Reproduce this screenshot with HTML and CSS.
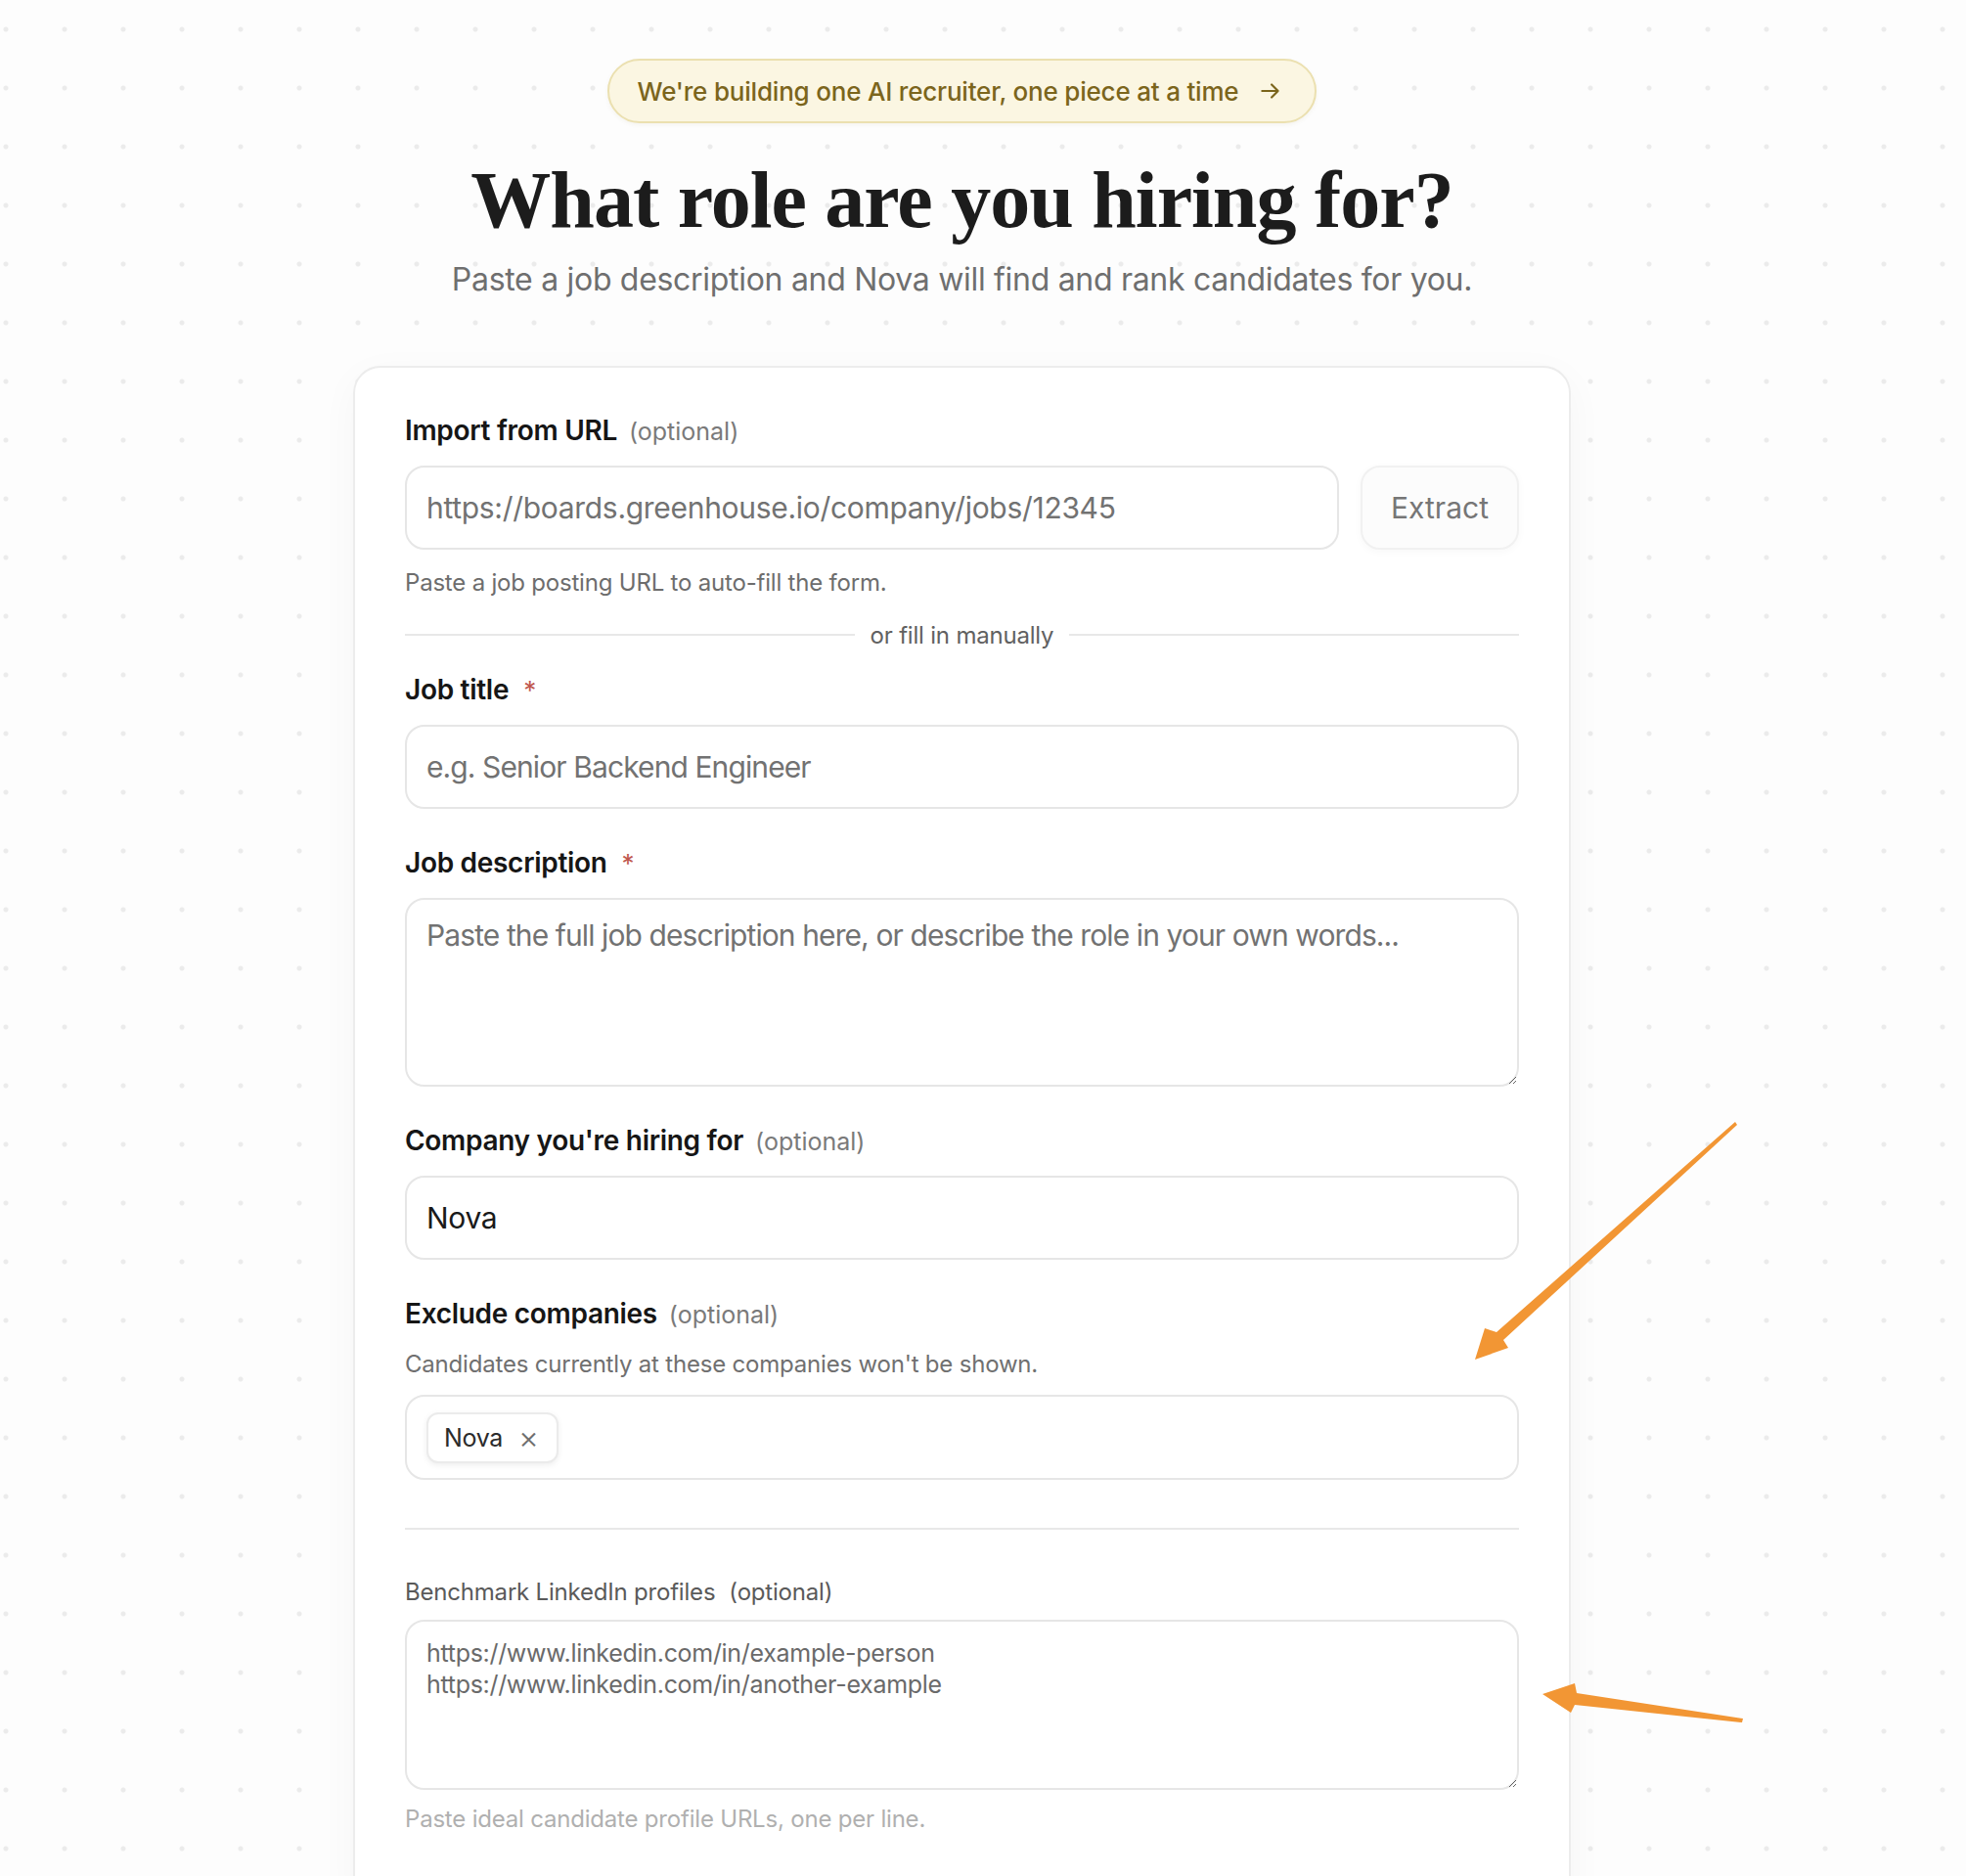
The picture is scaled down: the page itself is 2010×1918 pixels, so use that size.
FILE: index.html
```html
<!DOCTYPE html>
<html lang="en">
<head>
<meta charset="utf-8">
<title>What role are you hiring for?</title>
<link rel="stylesheet" href="styles.css">
</head>
<body>
<div class="page">
  <a class="pill" href="#">
    <span>We're building one AI recruiter, one piece at a time</span>
    <svg class="pill-arrow" viewBox="0 0 24 24" width="24" height="24" aria-hidden="true"><path d="M4 12h15M13 6l6 6-6 6" fill="none" stroke="currentColor" stroke-width="2" stroke-linecap="round" stroke-linejoin="round"/></svg>
  </a>
  <h1 class="title">What role are you hiring for?</h1>
  <p class="subtitle">Paste a job description and Nova will find and rank candidates for you.</p>

  <form class="card">
    <div class="label-row"><span class="label">Import from URL</span><span class="optional">(optional)</span></div>
    <div class="url-row">
      <input class="input url-input" type="text" placeholder="https://boards.greenhouse.io/company/jobs/12345">
      <button class="extract" type="button">Extract</button>
    </div>
    <p class="hint">Paste a job posting URL to auto-fill the form.</p>

    <div class="divider"><span class="divider-line"></span><span class="divider-text">or fill in manually</span><span class="divider-line"></span></div>

    <div class="label-row field-first"><span class="label">Job title</span><span class="req">*</span></div>
    <input class="input tight" type="text" placeholder="e.g. Senior Backend Engineer">

    <div class="label-row field"><span class="label">Job description</span><span class="req">*</span></div>
    <textarea class="input textarea tight" placeholder="Paste the full job description here, or describe the role in your own words..."></textarea>

    <div class="label-row field"><span class="label">Company you're hiring for</span><span class="optional">(optional)</span></div>
    <input class="input filled" type="text" value="Nova">

    <div class="label-row field"><span class="label">Exclude companies</span><span class="optional">(optional)</span></div>
    <p class="help">Candidates currently at these companies won't be shown.</p>
    <div class="input tag-input">
      <span class="chip">Nova<span class="chip-x">×</span></span>
    </div>

    <hr class="sep">

    <div class="label-row small-row"><span class="small-label">Benchmark LinkedIn profiles</span><span class="small-label">(optional)</span></div>
    <textarea class="input textarea small-area" placeholder="https://www.linkedin.com/in/example-person&#10;https://www.linkedin.com/in/another-example"></textarea>
    <p class="hint light">Paste ideal candidate profile URLs, one per line.</p>
  </form>
</div>

<svg class="annotations" width="2010" height="1918" viewBox="0 0 2010 1918" aria-hidden="true">
  <polygon class="arrow" points="1508,1390 1518,1358 1530,1362 1774,1147 1776,1150 1537,1370 1542,1378"/>
  <polygon class="arrow" points="1577,1732 1610,1721 1612,1731 1782,1757 1781,1761 1610,1743 1606,1751"/>
</svg>
</body>
</html>
```

FILE: styles.css
```css
* { box-sizing: border-box; }

html, body { margin: 0; padding: 0; }

body {
  font-family: "Inter", "Noto Sans", sans-serif;
  color: #1a1a1a;
  background-color: #fdfdfd;
  background-image: radial-gradient(circle at center, #ebebeb 0, #ebebeb 2px, transparent 3px);
  background-size: 60px 60px;
  background-position: -24px 0;
  min-height: 1918px;
}

.page {
  display: flex;
  flex-direction: column;
  align-items: center;
  padding: 60px 43px 0 0;
}

.pill {
  display: flex;
  align-items: center;
  gap: 20px;
  height: 66px;
  padding: 0 32px 0 29px;
  border: 2px solid #ebe0b0;
  border-radius: 33px;
  background: #fbf6e2;
  color: #7b651c;
  font-size: 26px;
  font-weight: 500;
  letter-spacing: -0.2px;
  text-decoration: none;
  box-shadow: 0 2px 4px rgba(120, 100, 30, 0.06);
}

.pill-arrow { width: 26px; height: 26px; }

.title {
  margin: 38px 0 0;
  font-family: "Liberation Serif", "Times New Roman", serif;
  font-weight: 700;
  font-size: 82px;
  line-height: 82px;
  letter-spacing: -1px;
  color: #1c1c1c;
}

.subtitle {
  margin: 20px 0 0;
  font-size: 32px;
  line-height: 40px;
  color: #6f6f6f;
  letter-spacing: -0.3px;
}

.card {
  width: 1245px;
  margin-top: 68px;
  padding: 46px 51px 80px;
  background: #ffffff;
  border: 2px solid #ececec;
  border-radius: 28px;
  box-shadow: 0 10px 40px rgba(0, 0, 0, 0.035);
  display: flex;
  flex-direction: column;
}

.label-row {
  display: flex;
  align-items: baseline;
  gap: 12px;
  height: 36px;
  margin-bottom: 18px;
}

.label {
  font-size: 28px;
  line-height: 36px;
  font-weight: 600;
  color: #161616;
  letter-spacing: -0.3px;
}

.optional {
  font-size: 25px;
  color: #7a7a7a;
}

.req {
  color: #c0574e;
  font-size: 26px;
  margin-left: 3px;
}

.field { margin-top: 37px; }
.field-first { margin-top: 23px; }

.input {
  display: block;
  width: 100%;
  height: 86px;
  padding: 0 20px;
  border: 2px solid #e6e6e6;
  border-radius: 20px;
  background: #ffffff;
  font-family: inherit;
  font-size: 30px;
  color: #1a1a1a;
  letter-spacing: -0.3px;
  outline: none;
}

.input.tight { letter-spacing: -0.9px; }

.input::placeholder { color: #727272; }

.filled { color: #1a1a1a; }

.url-row {
  display: flex;
  gap: 22px;
}

.url-input { flex: 1; }

.extract {
  flex: 0 0 162px;
  height: 86px;
  border: 2px solid #f1f1f1;
  border-radius: 20px;
  background: #fcfcfc;
  box-shadow: 0 2px 8px rgba(0, 0, 0, 0.03);
  font-family: inherit;
  font-size: 30px;
  color: #767676;
}

.hint {
  margin: 19px 0 0;
  font-size: 24px;
  line-height: 30px;
  color: #6d6d6d;
  letter-spacing: -0.2px;
}

.hint.light { margin-top: 15px; color: #b0b0b0; }

.divider {
  display: flex;
  align-items: center;
  gap: 16px;
  margin-top: 23px;
  height: 30px;
}

.divider-line {
  flex: 1;
  height: 2px;
  background: #e8e8e8;
}

.divider-text {
  font-size: 24px;
  color: #616161;
  letter-spacing: -0.2px;
}

.textarea {
  height: 193px;
  padding: 18px 20px;
  line-height: 36px;
  resize: vertical;
}

.help {
  margin: 1px 0 0;
  font-size: 24px;
  line-height: 30px;
  color: #707070;
  letter-spacing: -0.2px;
}

.tag-input {
  margin-top: 16px;
  height: 87px;
  display: flex;
  align-items: center;
  padding: 0 20px;
}

.chip {
  display: inline-flex;
  align-items: center;
  height: 52px;
  padding: 0 18px 0 16px;
  border: 2px solid #ebebeb;
  border-radius: 12px;
  background: #ffffff;
  box-shadow: 0 2px 6px rgba(0, 0, 0, 0.07);
  font-size: 25px;
  color: #2b2b2b;
}

.chip-x {
  margin-left: 16px;
  color: #6f6f6f;
  font-size: 32px;
  font-weight: 300;
  line-height: 1;
}

.sep {
  margin: 49px 0 0;
  border: 0;
  height: 2px;
  background: #e8e8e8;
}

.small-row {
  margin-top: 48px;
  height: 32px;
  gap: 14px;
  margin-bottom: 12px;
}

.small-label {
  font-size: 24px;
  line-height: 32px;
  color: #5a5a5a;
  letter-spacing: -0.2px;
}

.small-area {
  height: 174px;
  padding: 16px 20px;
  font-size: 25px;
  line-height: 32px;
}

.small-area::placeholder { color: #6a6a6a; }

.annotations {
  position: absolute;
  top: 0;
  left: 0;
  pointer-events: none;
}

.arrow { fill: #f29634; }
```
